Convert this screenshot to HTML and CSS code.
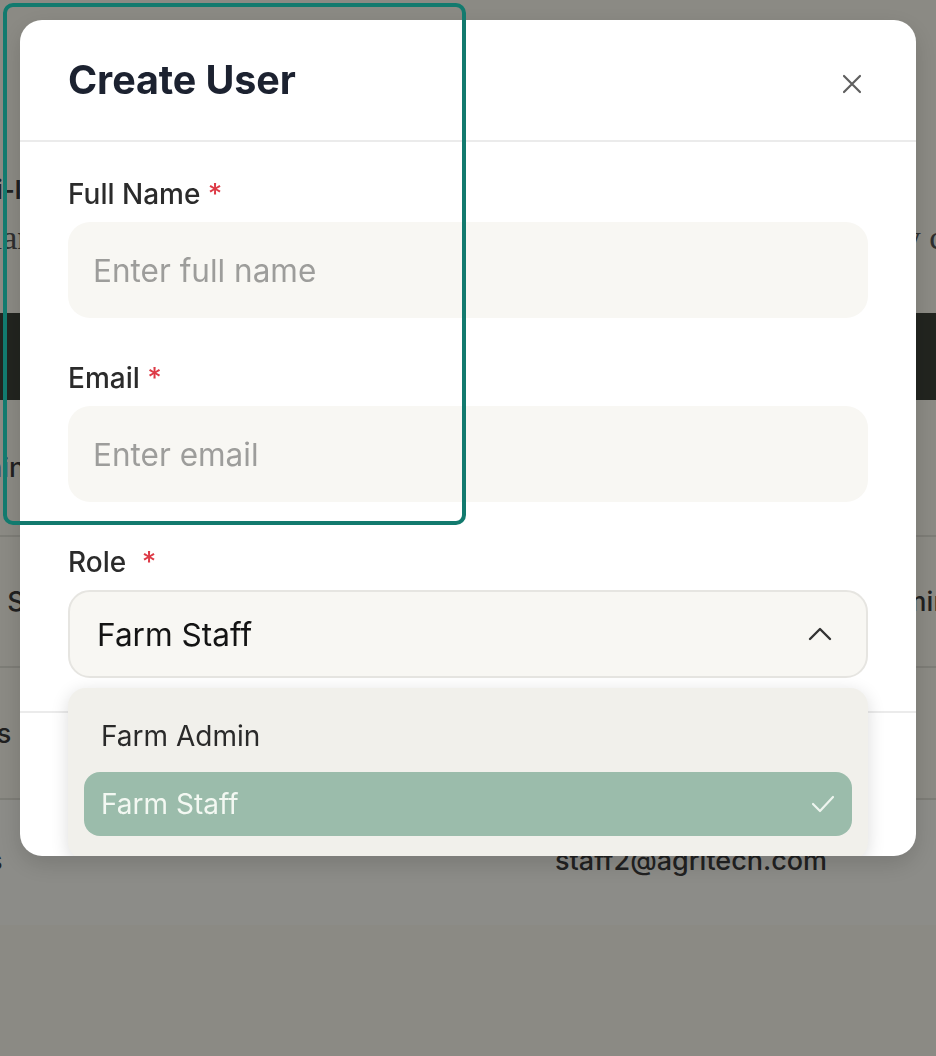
FILE: index.html
```html
<!DOCTYPE html>
<html lang="en">
<head>
<meta charset="utf-8">
<title>Create User</title>
<link rel="stylesheet" href="styles.css">
</head>
<body>
  <div class="page">
    <div class="page-head">
      <h1 class="page-title">Farm multi-level user management</h1>
      <p class="page-desc">Create, plan and manage the users of your farm. Each role controls what they can access and is saved.</p>
    </div>
    <div class="table">
      <div class="table-head">
        <span class="cell name">Name</span>
        <span class="cell email">Email</span>
      </div>
      <div class="row"><span class="cell name">Farm Admins</span><span class="cell email">admin@agritech.com</span></div>
      <div class="row"><span class="cell name">Alexandra Smith</span><span class="cell email">anna@agritech.com</span><span class="cell tail">Admin</span></div>
      <div class="row"><span class="cell name">Tom Harris</span><span class="cell email">staff1@agritech.com</span></div>
      <div class="row"><span class="cell name">Lee Harris</span><span class="cell email">staff2@agritech.com</span></div>
    </div>
  </div>

  <div class="overlay">
    <div class="modal">
      <div class="modal-header">
        <h2 class="modal-title">Create User</h2>
        <button class="close" type="button" aria-label="Close">
          <svg width="20" height="20" viewBox="0 0 20 20"><path d="M2 2 L18 18 M18 2 L2 18" stroke="#5f5f5f" stroke-width="2.2" stroke-linecap="round" fill="none"/></svg>
        </button>
      </div>
      <div class="modal-body">
        <div class="field">
          <label class="label">Full Name <span class="req">*</span></label>
          <div class="input"><span class="placeholder">Enter full name</span></div>
        </div>
        <div class="field">
          <label class="label">Email <span class="req">*</span></label>
          <div class="input"><span class="placeholder">Enter email</span></div>
        </div>
        <div class="field role-field">
          <label class="label">Role <span class="req wide">*</span></label>
          <div class="select">
            <span class="select-value">Farm Staff</span>
            <svg class="chevron" width="24" height="14" viewBox="0 0 24 14"><path d="M2 12 L12 2 L22 12" stroke="#333" stroke-width="2.4" fill="none" stroke-linecap="round" stroke-linejoin="round"/></svg>
          </div>
          <div class="menu">
            <div class="option">Farm Admin</div>
            <div class="option selected">Farm Staff
              <svg class="check" width="24" height="18" viewBox="0 0 24 18"><path d="M2 9 L9 16 L22 2" stroke="#eef5ef" stroke-width="2.2" fill="none" stroke-linecap="round" stroke-linejoin="round"/></svg>
            </div>
          </div>
        </div>
      </div>
      <div class="modal-footer">
        <button class="btn" type="button">Cancel</button>
        <button class="btn primary" type="button">Create</button>
      </div>
    </div>
  </div>

  <div class="focus-ring"></div>
</body>
</html>
```

FILE: styles.css
```css
* { box-sizing: border-box; }

html, body {
  margin: 0;
  padding: 0;
  width: 936px;
  height: 1056px;
  overflow: hidden;
}

body {
  background: #fdfcf0;
  font-family: Inter, "Noto Sans", "Liberation Sans", sans-serif;
  color: #222;
}

/* background page */
.page {
  margin-left: -130px;
  width: 1200px;
  padding-top: 170px;
}
.page-title {
  margin: 0;
  font-size: 26px;
  font-weight: 600;
  color: #3a3a3a;
  line-height: 40px;
}
.page-desc {
  margin: 6px 0 0;
  font-family: "Liberation Serif", serif;
  font-size: 34px;
  line-height: 44px;
  color: #555;
  white-space: nowrap;
}
.table {
  margin-top: 53px;
  background: #fdfcf0;
}
.table-head {
  height: 87px;
  background: #3e4239;
  display: flex;
  align-items: center;
  color: #fff;
  font-size: 24px;
}
.row {
  height: 131px;
  display: flex;
  align-items: center;
  border-bottom: 2px solid #e4e3d8;
  font-size: 27px;
  font-weight: 500;
  color: #3c3c3c;
}
.row:nth-child(2) { height: 137px; }
.row:nth-child(4) { height: 132px; }
.row:last-child {
  border-bottom: none;
  height: 125px;
  align-items: flex-start;
  padding-top: 44px;
  background: #fffff8;
}
.cell.name { width: 685px; white-space: nowrap; }
.cell.email { width: 312px; white-space: nowrap; }
.cell.tail { white-space: nowrap; }

/* overlay + modal */
.overlay {
  position: fixed;
  inset: 0;
  background: rgba(0, 0, 0, 0.45);
  padding: 20px;
  display: flex;
  align-items: flex-start;
  justify-content: center;
}
.modal {
  width: 896px;
  height: 836px;
  background: #fff;
  border-radius: 22px;
  overflow: hidden;
  display: flex;
  flex-direction: column;
  box-shadow: 0 8px 24px rgba(0,0,0,0.15);
}
.modal-header {
  height: 122px;
  padding: 0 48px;
  display: flex;
  align-items: center;
  justify-content: space-between;
  border-bottom: 2px solid #ebebeb;
  flex-shrink: 0;
}
.modal-title {
  margin: 0;
  font-size: 39.5px;
  font-weight: 700;
  color: #1c2230;
  letter-spacing: -0.1px;
}
.close {
  border: none;
  background: none;
  padding: 0;
  width: 20px;
  height: 20px;
  margin-top: 8px;
  margin-right: 6px;
  display: flex;
}

.modal-body {
  padding: 36px 48px 33px;
  flex-shrink: 0;
}
.field { margin-bottom: 44px; }
.field:last-child { margin-bottom: 0; }
.label {
  display: block;
  font-size: 28px;
  font-weight: 500;
  color: #2b2b2b;
  line-height: 32px;
  margin-bottom: 12px;
}
.req { color: #dd3a46; margin-left: 0; }
.req.wide { margin-left: 8px; }

.input {
  height: 96px;
  background: #f8f7f3;
  border-radius: 22px;
  padding: 0 25px;
  display: flex;
  align-items: center;
}
.placeholder {
  font-size: 31.5px;
  color: #9d9d9b;
}

.role-field { position: relative; }
.select {
  height: 88px;
  background: #f8f7f3;
  border: 2px solid #e6e5e1;
  border-radius: 22px;
  padding: 0 34px 0 27px;
  display: flex;
  align-items: center;
  justify-content: space-between;
}
.select-value {
  font-size: 31.6px;
  color: #141414;
}

.menu {
  position: absolute;
  left: 0;
  right: 0;
  top: calc(100% + 10px);
  background: #f1f0eb;
  border-radius: 18px;
  padding: 16px 16px 20px;
  box-shadow: 0 4px 18px rgba(0,0,0,0.14);
  z-index: 5;
}
.option {
  height: 64px;
  border-radius: 16px;
  padding: 0 17px;
  display: flex;
  align-items: center;
  justify-content: space-between;
  font-size: 28px;
  color: #2a2a2a;
  margin-bottom: 4px;
}
.option.selected {
  background: #9bbcab;
  color: #f3f8f2;
}

.modal-footer {
  border-top: 2px solid #ebebeb;
  padding: 24px 48px;
  display: flex;
  justify-content: flex-end;
  gap: 16px;
}
.btn {
  font-family: inherit;
  font-size: 24px;
  padding: 14px 28px;
  border-radius: 14px;
  border: 2px solid #e0e0e0;
  background: #fff;
}
.btn.primary { background: #2f6b57; color: #fff; border-color: #2f6b57; }

/* annotation highlight */
.focus-ring {
  position: fixed;
  left: 3px;
  top: 3px;
  width: 463px;
  height: 522px;
  border: 4px solid #127a6e;
  border-radius: 10px;
  pointer-events: none;
  z-index: 10;
}
```
